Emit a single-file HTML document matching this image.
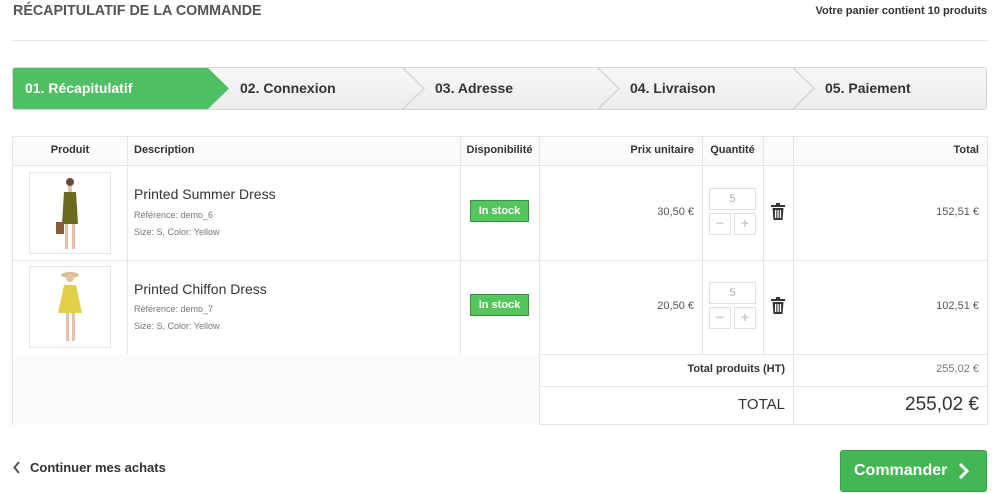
<!DOCTYPE html>
<html><head><meta charset="utf-8"><style>
*{margin:0;padding:0;box-sizing:border-box}
body{width:1000px;height:493px;background:#fff;font-family:"Liberation Sans",Arial,sans-serif;color:#333;position:relative;overflow:hidden}
.a{position:absolute}
.h1{left:13px;top:3px;font-size:14.3px;color:#555;font-weight:bold;letter-spacing:0}
.cnt{right:13px;top:5px;font-size:11px;font-weight:bold;color:#333}
.hr{left:12px;top:40px;width:975px;height:1px;background:#e5e5e5}
.steps{left:12px;top:67px;width:975px;height:43px;border:1px solid #d6d4d4;border-radius:3px;background:linear-gradient(#f7f7f7,#ededed);overflow:hidden}
.st{position:absolute;top:0;height:41px;line-height:41px;font-size:14px;font-weight:bold;color:#333}
.cell{position:absolute;border-right:1px solid #e5e5e5;border-bottom:1px solid #e5e5e5}
.th{font-size:11px;font-weight:bold;color:#333;line-height:29px}
.stock{position:absolute;width:59px;height:22px;background:#55c65e;border:1px solid #36943e;color:#fff;font-size:11px;font-weight:bold;text-align:center;line-height:20px}
.qty{position:absolute;width:47px;height:22px;border:1px solid #e0e0e0;color:#aaa;font-size:11px;text-align:center;line-height:20px}
.pm{position:absolute;width:22px;height:22px;border:1px solid #e0e0e0;color:#ccc;font-size:14px;text-align:center;line-height:19px;font-weight:bold}
.small{font-size:9px;color:#777}
</style></head><body>
<div class="a h1">RÉCAPITULATIF DE LA COMMANDE</div>
<div class="a cnt">Votre panier contient 10 produits</div>
<div class="a hr"></div>
<div class="a steps">
<svg class="a" style="left:0;top:0" width="975" height="41">
<polygon points="0,0 195,0 216,20.5 195,41 0,41" fill="#4fbf65"/>
<g fill="none" stroke="#d6d4d4" stroke-width="1.5">
<polyline points="390,0 411,20.5 390,41"/><polyline points="585,0 606,20.5 585,41"/><polyline points="780,0 801,20.5 780,41"/>
</g></svg>
<div class="st" style="left:12px;color:#fff">01. Récapitulatif</div>
<div class="st" style="left:227px">02. Connexion</div>
<div class="st" style="left:422px">03. Adresse</div>
<div class="st" style="left:617px">04. Livraison</div>
<div class="st" style="left:812px">05. Paiement</div>
</div>
<!-- table -->
<div class="a" style="left:13px;top:137px;width:975px;height:28px;background:#fbfbfb"></div>
<div class="a" style="left:12px;top:136px;width:976px;height:219px;border-left:1px solid #e5e5e5;border-top:1px solid #e5e5e5"></div>
<div class="cell th" style="left:13px;top:136px;width:115px;height:30px;text-align:center">Produit</div>
<div class="cell th" style="left:127px;top:136px;width:334px;height:30px;padding-left:7px">Description</div>
<div class="cell th" style="left:460px;top:136px;width:80px;height:30px;text-align:center">Disponibilité</div>
<div class="cell th" style="left:539px;top:136px;width:164px;height:30px;text-align:right;padding-right:8px">Prix unitaire</div>
<div class="cell th" style="left:702px;top:136px;width:62px;height:30px;text-align:center">Quantité</div>
<div class="cell th" style="left:763px;top:136px;width:31px;height:30px"></div>
<div class="cell th" style="left:793px;top:136px;width:195px;height:30px;text-align:right;padding-right:8px">Total</div>
<!-- rows -->
<div class="cell" style="left:13px;top:165px;width:115px;height:96px"></div>
<div class="cell" style="left:127px;top:165px;width:334px;height:96px"></div>
<div class="cell" style="left:460px;top:165px;width:80px;height:96px"></div>
<div class="cell" style="left:539px;top:165px;width:164px;height:96px"></div>
<div class="cell" style="left:702px;top:165px;width:62px;height:96px"></div>
<div class="cell" style="left:763px;top:165px;width:31px;height:96px"></div>
<div class="cell" style="left:793px;top:165px;width:195px;height:96px"></div>
<div class="cell" style="left:13px;top:260px;width:115px;height:95px"></div>
<div class="cell" style="left:127px;top:260px;width:334px;height:95px"></div>
<div class="cell" style="left:460px;top:260px;width:80px;height:95px"></div>
<div class="cell" style="left:539px;top:260px;width:164px;height:95px"></div>
<div class="cell" style="left:702px;top:260px;width:62px;height:95px"></div>
<div class="cell" style="left:763px;top:260px;width:31px;height:95px"></div>
<div class="cell" style="left:793px;top:260px;width:195px;height:95px"></div>
<!-- images -->
<div class="a" style="left:29px;top:172px;width:82px;height:82px;border:1px solid #e5e5e5"></div>
<svg class="a" style="left:50px;top:174px" width="40" height="78"><circle cx="20" cy="8" r="4" fill="#6b4a3a"/><rect x="18" y="12" width="4" height="6" fill="#e8c2a8"/><polygon points="14,18 26,18 28,50 12,50" fill="#6b6b20"/><rect x="6" y="48" width="8" height="12" fill="#8a5a3a"/><rect x="15" y="50" width="3" height="25" fill="#e8c2a8"/><rect x="22" y="50" width="3" height="25" fill="#e8c2a8"/></svg>
<div class="a" style="left:29px;top:266px;width:82px;height:82px;border:1px solid #e5e5e5"></div>
<svg class="a" style="left:50px;top:268px" width="40" height="78"><ellipse cx="20" cy="7" rx="9" ry="3" fill="#d8c090"/><circle cx="20" cy="10" r="4" fill="#e8c2a8"/><polygon points="14,17 26,17 32,45 8,45" fill="#e3d04a"/><rect x="16" y="45" width="3" height="28" fill="#e8c2a8"/><rect x="22" y="45" width="3" height="28" fill="#e8c2a8"/></svg>
<!-- descriptions -->
<div class="a" style="left:134px;top:186px;font-size:14px;color:#333">Printed Summer Dress</div>
<div class="a small" style="left:134px;top:210px">Référence: demo_6</div>
<div class="a small" style="left:134px;top:227px">Size: S, Color: Yellow</div>
<div class="a" style="left:134px;top:281px;font-size:14px;color:#333">Printed Chiffon Dress</div>
<div class="a small" style="left:134px;top:304px">Référence: demo_7</div>
<div class="a small" style="left:134px;top:321px">Size: S, Color: Yellow</div>
<div class="stock" style="left:470px;top:200px">In stock</div>
<div class="stock" style="left:470px;top:294px">In stock</div>
<div class="a" style="right:306px;top:206px;font-size:11px;color:#555">30,50 €</div>
<div class="a" style="right:306px;top:300px;font-size:11px;color:#555">20,50 €</div>
<div class="qty" style="left:709px;top:188px">5</div>
<div class="pm" style="left:709px;top:213px">−</div><div class="pm" style="left:734px;top:213px">+</div>
<div class="qty" style="left:709px;top:282px">5</div>
<div class="pm" style="left:709px;top:307px">−</div><div class="pm" style="left:734px;top:307px">+</div>
<svg class="a" style="left:771px;top:203px" width="14" height="17"><rect x="0" y="2" width="14" height="2" fill="#333"/><rect x="5" y="0" width="4" height="2" fill="#333"/><path d="M1.5 5h11l-1 12h-9z" fill="#333"/><rect x="4" y="7" width="1.3" height="8" fill="#fff"/><rect x="6.4" y="7" width="1.3" height="8" fill="#fff"/><rect x="8.8" y="7" width="1.3" height="8" fill="#fff"/></svg>
<svg class="a" style="left:771px;top:297px" width="14" height="17"><rect x="0" y="2" width="14" height="2" fill="#333"/><rect x="5" y="0" width="4" height="2" fill="#333"/><path d="M1.5 5h11l-1 12h-9z" fill="#333"/><rect x="4" y="7" width="1.3" height="8" fill="#fff"/><rect x="6.4" y="7" width="1.3" height="8" fill="#fff"/><rect x="8.8" y="7" width="1.3" height="8" fill="#fff"/></svg>
<div class="a" style="right:21px;top:206px;font-size:11px;color:#555">152,51 €</div>
<div class="a" style="right:21px;top:300px;font-size:11px;color:#555">102,51 €</div>
<!-- footer -->
<div class="a" style="left:12px;top:354px;width:528px;height:71px;background:#fbfbfb;border-left:1px solid #e5e5e5"></div>
<div class="cell" style="left:539px;top:354px;width:255px;height:33px;border-left:1px solid #e5e5e5;text-align:right;padding-right:8px;font-size:11px;font-weight:bold;line-height:31px">Total produits (HT)</div>
<div class="cell" style="left:793px;top:354px;width:195px;height:33px;text-align:right;padding-right:8px;font-size:11px;color:#777;line-height:31px">255,02 €</div>
<div class="cell" style="left:539px;top:386px;width:255px;height:39px;border-left:1px solid #e5e5e5;text-align:right;padding-right:8px;font-size:15px;color:#333;line-height:38px">TOTAL</div>
<div class="cell" style="left:793px;top:386px;width:195px;height:39px;text-align:right;padding-right:8px;font-size:19px;color:#333;line-height:38px">255,02 €</div>
<svg class="a" style="left:13px;top:461px" width="8" height="13"><polyline points="6,1 1.5,6.5 6,12" fill="none" stroke="#555" stroke-width="2"/></svg>
<div class="a" style="left:30px;top:460px;font-size:13px;font-weight:bold;color:#333">Continuer mes achats</div>
<div class="a" style="left:840px;top:450px;width:147px;height:42px;background:#43b754;border:1px solid #3a9d4a;border-radius:3px;color:#fff;font-size:16px;font-weight:bold;line-height:40px;padding-left:13px">Commander</div>
<svg class="a" style="left:958px;top:462px" width="12" height="18"><polyline points="2,2 9,9 2,16" fill="none" stroke="#fff" stroke-width="3"/></svg>
</body></html>
